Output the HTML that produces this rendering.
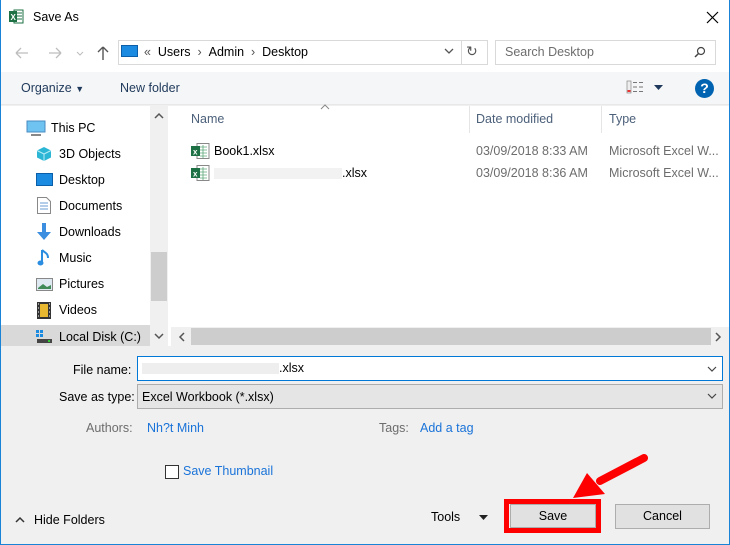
<!DOCTYPE html>
<html><head><meta charset="utf-8"><style>
*{margin:0;padding:0;box-sizing:border-box}
body{width:730px;height:545px;overflow:hidden;background:#f0f0f0;font-family:"Liberation Sans","Noto Sans CJK SC",sans-serif;font-size:12.5px;color:#000;position:relative}
.a{position:absolute;white-space:nowrap}
.t{line-height:16px}
</style></head><body>
<!-- window border -->
<div class="a" style="left:0;top:0;width:730px;height:545px;border:1px solid #1883d7;border-top:none;z-index:50;pointer-events:none"></div>
<!-- title -->
<div class="a" style="left:0;top:0;width:730px;height:72px;background:#fff"></div>
<svg class="a" style="left:9px;top:9px" width="15" height="15"><rect x="5" y="1" width="9" height="13" fill="#fff" stroke="#1e7145"/><path d="M8 4h5M8 7h5M8 10h5" stroke="#1e7145"/><rect x="0" y="2" width="8" height="11" fill="#1e7145"/><text x="1.5" y="11" font-size="8" fill="#fff" font-family="Liberation Sans" font-weight="bold">X</text></svg>
<div class="a t" style="left:33px;top:9px">Save As</div>
<svg class="a" style="left:706px;top:11px" width="13" height="13"><path d="M1 1L12 12M12 1L1 12" stroke="#000" stroke-width="1.2"/></svg>
<!-- nav -->
<svg class="a" style="left:14px;top:45px" width="100" height="16"><path d="M2 8h12M2 8l5-5M2 8l5 5" stroke="#bdbdbd" stroke-width="1.3" fill="none"/><path d="M47 8h-12M47 8l-5-5M47 8l-5 5" stroke="#bdbdbd" stroke-width="1.3" fill="none"/><path d="M63 7l3 3 3-3" stroke="#bdbdbd" fill="none"/><path d="M89 2v13M89 2l-5 5M89 2l5 5" stroke="#555" stroke-width="1.4" fill="none"/></svg>
<div class="a" style="left:118px;top:40px;width:370px;height:25px;border:1px solid #d9d9d9;background:#fff"></div>
<div class="a" style="left:121px;top:45px;width:17px;height:12px;background:#1a8be0;border:1px solid #0a5fa8"></div>
<div class="a t" style="left:144px;top:44px;color:#555">«&nbsp;&nbsp;<span style="color:#000">Users</span>&nbsp;&nbsp;›&nbsp;&nbsp;<span style="color:#000">Admin</span>&nbsp;&nbsp;›&nbsp;&nbsp;<span style="color:#000">Desktop</span></div>
<svg class="a" style="left:444px;top:48px" width="10" height="7"><path d="M1 1l4 4 4-4" stroke="#555" stroke-width="1.3" fill="none"/></svg>
<div class="a" style="left:461px;top:41px;width:1px;height:23px;background:#d9d9d9"></div>
<div class="a t" style="left:466px;top:43px;color:#555;font-size:14px">↻</div>
<div class="a" style="left:495px;top:40px;width:221px;height:25px;border:1px solid #d9d9d9;background:#fff"></div>
<div class="a t" style="left:505px;top:44px;color:#6d6d6d">Search Desktop</div>
<svg class="a" style="left:694px;top:46px" width="12" height="12"><circle cx="7" cy="5" r="3.5" stroke="#444" fill="none" stroke-width="1.2"/><path d="M4.5 7.5L1 11" stroke="#444" stroke-width="1.5"/></svg>
<!-- toolbar -->
<div class="a" style="left:0;top:72px;width:730px;height:33px;background:#f5f6f7;border-bottom:1px solid #e8e8e8"></div>
<div class="a t" style="left:21px;top:80px;color:#1e395b">Organize <span style="font-size:9px">▼</span></div>
<div class="a t" style="left:120px;top:80px;color:#1e395b">New folder</div>
<svg class="a" style="left:626px;top:80px" width="20" height="15"><rect x="1" y="1" width="4" height="12" fill="#eee" stroke="#888" stroke-width=".7"/><rect x="1.5" y="10" width="3" height="2" fill="#e33"/><path d="M7 2.5h4M13 2.5h4M7 7h4M13 7h4M7 11.5h4M13 11.5h4" stroke="#777"/></svg>
<svg class="a" style="left:654px;top:85px" width="9" height="6"><path d="M0 0h9L4.5 5z" fill="#1e395b"/></svg>
<div class="a" style="left:695px;top:79px;width:19px;height:19px;border-radius:50%;background:#0063b1;color:#fff;font-weight:bold;font-size:14px;text-align:center;line-height:19px">?</div>
<!-- nav pane -->
<div class="a" style="left:1px;top:106px;width:149px;height:240px;background:#fff"></div>
<div class="a" style="left:1px;top:325px;width:149px;height:21px;background:#d9d9d9"></div>
<div class="a" style="left:150px;top:106px;width:18px;height:240px;background:#f0f0f0"></div>
<div class="a" style="left:151px;top:252px;width:16px;height:49px;background:#cdcdcd"></div>
<svg class="a" style="left:154px;top:112px" width="10" height="7"><path d="M1 6l4-4 4 4" stroke="#555" stroke-width="1.5" fill="none"/></svg>
<svg class="a" style="left:154px;top:333px" width="10" height="7"><path d="M1 1l4 4 4-4" stroke="#555" stroke-width="1.5" fill="none"/></svg>
<div class="a" style="left:168px;top:106px;width:3px;height:240px;background:#fff"></div>
<svg class="a" style="left:26px;top:120px" width="20" height="16"><rect x="1" y="1" width="18" height="11" fill="#6fc3f0" stroke="#4a8bc2"/><path d="M5 15h10" stroke="#888" stroke-width="2"/></svg>
<div class="a t" style="left:51px;top:120px">This PC</div>
<svg class="a" style="left:36px;top:146px" width="16" height="16"><path d="M8 1l7 3.5v7L8 15 1 11.5v-7z" fill="#2bb6d6"/><path d="M8 8l7-3.5M8 8v7M8 8L1 4.5" stroke="#b8ecf7"/></svg>
<div class="a t" style="left:59px;top:146px">3D Objects</div>
<svg class="a" style="left:36px;top:173px" width="17" height="14"><rect x="0.5" y="0.5" width="16" height="12" fill="#1a8be0" stroke="#0a5fa8"/></svg>
<div class="a t" style="left:59px;top:172px">Desktop</div>
<svg class="a" style="left:37px;top:197px" width="14" height="17"><path d="M.5.5h9l4 4v12h-13z" fill="#fff" stroke="#888"/><path d="M3 6h8M3 9h8M3 12h8" stroke="#6a9bd1"/></svg>
<div class="a t" style="left:59px;top:198px">Documents</div>
<svg class="a" style="left:36px;top:223px" width="16" height="18"><path d="M6 0h4v9h5l-7 8-7-8h5z" fill="#3b8ee0"/></svg>
<div class="a t" style="left:59px;top:224px">Downloads</div>
<svg class="a" style="left:37px;top:249px" width="14" height="18"><path d="M5 1v12" stroke="#2a8de0" stroke-width="2"/><ellipse cx="3.5" cy="14" rx="3" ry="2.5" fill="#2a8de0"/><path d="M5 1c3 3 6 3 6 8" stroke="#2a8de0" stroke-width="2" fill="none"/></svg>
<div class="a t" style="left:59px;top:250px">Music</div>
<svg class="a" style="left:36px;top:278px" width="17" height="13"><rect x=".5" y=".5" width="16" height="12" fill="#dfe9f2" stroke="#888"/><path d="M2 10l5-4 4 3 4-2v4H2z" fill="#3f8a57"/></svg>
<div class="a t" style="left:59px;top:276px">Pictures</div>
<svg class="a" style="left:37px;top:302px" width="14" height="17"><rect width="14" height="17" fill="#333"/><rect x="3" y="2" width="8" height="13" fill="#e8b830"/><path d="M1 2h1M1 6h1M1 10h1M1 14h1M12 2h1M12 6h1M12 10h1M12 14h1" stroke="#fff"/></svg>
<div class="a t" style="left:59px;top:302px">Videos</div>
<svg class="a" style="left:36px;top:330px" width="17" height="14"><rect x="0" y="0" width="3" height="3" fill="#1a8be0"/><rect x="4" y="0" width="3" height="3" fill="#1a8be0"/><rect x="0" y="4" width="3" height="3" fill="#1a8be0"/><rect x="4" y="4" width="3" height="3" fill="#1a8be0"/><rect x="1" y="9" width="15" height="4" fill="#444"/><rect x="12" y="10" width="2" height="2" fill="#3c3"/></svg>
<div class="a t" style="left:59px;top:329px">Local Disk (C:)</div>
<!-- file list -->
<div class="a" style="left:171px;top:106px;width:558px;height:240px;background:#fff"></div>
<svg class="a" style="left:320px;top:104px" width="10" height="6"><path d="M1 5l4-4 4 4" stroke="#888" fill="none"/></svg>
<div class="a t" style="left:191px;top:111px;color:#4c607a">Name</div>
<div class="a" style="left:469px;top:106px;width:1px;height:27px;background:#e5e5e5"></div>
<div class="a t" style="left:476px;top:111px;color:#4c607a">Date modified</div>
<div class="a" style="left:601px;top:106px;width:1px;height:27px;background:#e5e5e5"></div>
<div class="a t" style="left:609px;top:111px;color:#4c607a">Type</div>
<svg class="a" style="left:191px;top:143px" width="19" height="16"><rect x="6" y=".5" width="12" height="15" fill="#fff" stroke="#888"/><path d="M9 4h7M9 7h7M9 10h7M9 13h7M12 2v13" stroke="#5fa87a" stroke-width=".8"/><rect x="0" y="3" width="9" height="10" fill="#1e7145"/><text x="2" y="11.5" font-size="8" fill="#fff" font-family="Liberation Sans" font-weight="bold">x</text></svg>
<div class="a t" style="left:214px;top:143px">Book1.xlsx</div>
<svg class="a" style="left:191px;top:165px" width="19" height="16"><rect x="6" y=".5" width="12" height="15" fill="#fff" stroke="#888"/><path d="M9 4h7M9 7h7M9 10h7M9 13h7M12 2v13" stroke="#5fa87a" stroke-width=".8"/><rect x="0" y="3" width="9" height="10" fill="#1e7145"/><text x="2" y="11.5" font-size="8" fill="#fff" font-family="Liberation Sans" font-weight="bold">x</text></svg>
<div class="a" style="left:214px;top:168px;width:128px;height:11px;background:#ececec;opacity:.7"></div>
<div class="a t" style="left:342px;top:165px">.xlsx</div>
<div class="a t" style="left:476px;top:143px;color:#6d6d6d">03/09/2018 8:33 AM</div>
<div class="a t" style="left:609px;top:143px;color:#6d6d6d">Microsoft Excel W...</div>
<div class="a t" style="left:476px;top:165px;color:#6d6d6d">03/09/2018 8:36 AM</div>
<div class="a t" style="left:609px;top:165px;color:#6d6d6d">Microsoft Excel W...</div>
<div class="a" style="left:171px;top:327px;width:558px;height:19px;background:#f0f0f0"></div>
<div class="a" style="left:191px;top:328px;width:520px;height:17px;background:#cdcdcd"></div>
<svg class="a" style="left:178px;top:332px" width="7" height="10"><path d="M6 1L2 5l4 4" stroke="#555" stroke-width="1.5" fill="none"/></svg>
<svg class="a" style="left:715px;top:332px" width="7" height="10"><path d="M1 1l4 4-4 4" stroke="#555" stroke-width="1.5" fill="none"/></svg>
<!-- bottom -->
<div class="a t" style="left:73px;top:362px">File name:</div>
<div class="a" style="left:137px;top:356px;width:586px;height:25px;border:1px solid #0078d7;background:#fff"></div>
<div class="a" style="left:142px;top:363px;width:137px;height:11px;background:#eaeaea;opacity:.8"></div>
<div class="a t" style="left:279px;top:360px">.xlsx</div>
<svg class="a" style="left:707px;top:366px" width="10" height="7"><path d="M1 1l4 4 4-4" stroke="#444" stroke-width="1.2" fill="none"/></svg>
<div class="a t" style="left:59px;top:389px">Save as type:</div>
<div class="a" style="left:137px;top:384px;width:586px;height:25px;border:1px solid #adadad;background:#e5e5e5"></div>
<div class="a t" style="left:142px;top:389px">Excel Workbook (*.xlsx)</div>
<svg class="a" style="left:707px;top:393px" width="10" height="7"><path d="M1 1l4 4 4-4" stroke="#444" stroke-width="1.2" fill="none"/></svg>
<div class="a t" style="left:86px;top:420px;color:#6d6d6d">Authors:</div>
<div class="a t" style="left:147px;top:420px;color:#1a73d9">Nh?t Minh</div>
<div class="a t" style="left:379px;top:420px;color:#6d6d6d">Tags:</div>
<div class="a t" style="left:420px;top:420px;color:#1a73d9">Add a tag</div>
<div class="a" style="left:165px;top:465px;width:14px;height:14px;border:1px solid #333;background:#fff"></div>
<div class="a t" style="left:183px;top:463px;color:#1a73d9">Save Thumbnail</div>
<svg class="a" style="left:15px;top:516px" width="10" height="7"><path d="M1 6l4-4 4 4" stroke="#333" stroke-width="1.5" fill="none"/></svg>
<div class="a t" style="left:34px;top:512px">Hide Folders</div>
<div class="a t" style="left:431px;top:509px">Tools</div>
<svg class="a" style="left:479px;top:515px" width="9" height="6"><path d="M0 0h9L4.5 5z" fill="#222"/></svg>
<div class="a" style="left:510px;top:504px;width:86px;height:24px;border:1px solid #adadad;background:#e1e1e1;text-align:center;line-height:22px">Save</div>
<div class="a" style="left:504px;top:499px;width:97px;height:34px;border:5px solid #f00"></div>
<div class="a" style="left:615px;top:504px;width:95px;height:25px;border:1px solid #adadad;background:#e1e1e1;text-align:center;line-height:23px">Cancel</div>
<svg class="a" style="left:560px;top:448px" width="95" height="60"><path d="M84 10L40 33" stroke="#f00" stroke-width="8" stroke-linecap="round"/><path d="M13 50L27 25L45 46z" fill="#f00"/></svg>
</body></html>
